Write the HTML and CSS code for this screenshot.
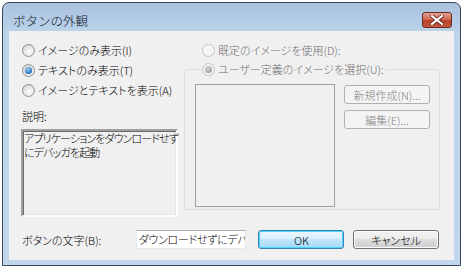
FILE: index.html
```html
<!DOCTYPE html>
<html lang="ja">

<head>
    <meta charset="UTF-8">
    <title>ボタンの外観</title>
    <link rel="stylesheet" href="styles.css">
</head>

<body>
    <div class="window">
        <div class="titlebar">
            <span class="title">ボタンの外観</span>
            <button class="close" aria-label="閉じる">
                <svg width="14" height="10" viewBox="0 0 14 10">
                    <path d="M2 1 L12 9 M12 1 L2 9" stroke="#5a1a12" stroke-width="3.6" stroke-linecap="square" />
                    <path d="M2 1 L12 9 M12 1 L2 9" stroke="#fff" stroke-width="2.2" stroke-linecap="square" />
                </svg>
            </button>
        </div>
        <div class="client">
            <div class="top">
                <div class="left-col">
                    <label class="radio-row"><span class="radio"></span>イメージのみ表示(I)</label>
                    <label class="radio-row"><span class="radio checked"></span>テキストのみ表示(T)</label>
                    <label class="radio-row"><span class="radio"></span>イメージとテキストを表示(A)</label>
                    <div class="desc-label">説明:</div>
                    <div class="desc-box">アプリケーションをダウンロードせず<br>にデバッガを起動</div>
                </div>
                <div class="right-col">
                    <label class="radio-row disabled first"><span class="radio"></span>既定のイメージを使用(D):</label>
                    <fieldset class="group">
                        <legend class="radio-row disabled"><span class="radio checked"></span>ユーザー定義のイメージを選択(U):</legend>
                        <div class="group-body">
                            <div class="preview"></div>
                            <div class="side-buttons">
                                <button class="btn" disabled>新規作成(N)...</button>
                                <button class="btn" disabled>編集(E)...</button>
                            </div>
                        </div>
                    </fieldset>
                </div>
            </div>
            <div class="bottom">
                <span class="text-label">ボタンの文字(B):</span>
                <div class="textbox"><span class="textbox-value">ダウンロードせずにデバッガを起動</span></div>
                <button class="btn default">OK</button>
                <button class="btn">キャンセル</button>
            </div>
        </div>
    </div>
</body>

</html>
```

FILE: styles.css
```css
body {
    margin: 0;
    background: #fff;
    font-family: "Noto Sans CJK JP", "Liberation Sans", sans-serif;
    font-size: 11px;
    font-weight: 300;
    color: #000;
}

.window {
    margin: 2px 0 0 2px;
    width: 457px;
    height: 262px;
    border: 1px solid #3a4756;
    border-radius: 7px 7px 0 0;
    background: linear-gradient(#a9c1dc, #bcd3ea 30px, #c2d7ed);
    box-shadow: 0 2px 0 #52c8ea;
    display: flex;
    flex-direction: column;
}

.titlebar {
    height: 28px;
    display: flex;
    align-items: center;
    padding: 0 8px 0 10px;
}

.title {
    flex: 1;
    padding-top: 6px;
    font-size: 12.5px;
    color: #0d1a2a;
}

.close {
    margin-top: 6px;
    width: 30px;
    height: 16px;
    padding: 0;
    border: 1px solid #6b2a22;
    border-radius: 3px;
    background: linear-gradient(#e3a08f, #cf6a55 45%, #b8412c 55%, #c6573f);
    display: flex;
    align-items: center;
    justify-content: center;
}

.client {
    margin: 0 6px;
    height: 229px;
    background: #f0f0f0;
    padding: 9px 15px 0 12px;
    box-sizing: border-box;
}

.top {
    display: flex;
    gap: 6px;
}

.left-col {
    width: 157px;
}

.radio-row {
    display: flex;
    align-items: center;
    height: 20px;
    white-space: nowrap;
    font-feature-settings: "palt";
}

.left-col .radio-row {
    padding-left: 1px;
}

.radio {
    width: 11px;
    height: 11px;
    border: 1px solid #8e8f8f;
    border-radius: 50%;
    background: radial-gradient(circle at 60% 65%, #fcfcfc, #dcdcdc 70%, #c8c8c8);
    margin-right: 3px;
    box-sizing: content-box;
    position: relative;
    flex: none;
}

.radio.checked::after {
    content: "";
    position: absolute;
    left: 2px;
    top: 2px;
    width: 7px;
    height: 7px;
    border-radius: 50%;
    background: radial-gradient(circle at 40% 35%, #9fd6f7, #2f7ac4 60%, #1c4f93);
}

.disabled {
    color: #6d6d6d;
}

.disabled .radio {
    border-color: #c2c2c2;
    background: #f4f4f4;
}

.disabled .radio.checked::after {
    background: radial-gradient(circle at 40% 35%, #d6d6d6, #a2a2a2 70%, #8a8a8a);
}

.desc-label {
    margin-top: 6px;
    height: 20px;
    line-height: 20px;
    padding-left: 1px;
}

.desc-box {
    margin-top: 3px;
    height: 88px;
    box-sizing: border-box;
    border-style: solid;
    border-width: 2px;
    border-color: #a0a0a0 #fff #fff #a0a0a0;
    box-shadow: inset 1px 1px #696969, inset -1px -1px #e3e3e3;
    padding: 0 0 0 1px;
    line-height: 14px;
    letter-spacing: -0.9px;
    font-feature-settings: "palt";
    white-space: nowrap;
}

.right-col {
    width: 256px;
}

.right-col .first {
    padding-left: 18px;
}

.group {
    margin: 0;
    padding: 0 9px 10px 10px;
    border: 1px solid #d5dfe5;
    border-radius: 3px;
    height: 150px;
    box-sizing: border-box;
}

.group legend {
    padding: 0 2px 0 0;
    margin-left: 7px;
    height: 18px;
}

.group-body {
    display: flex;
    gap: 9px;
    padding-top: 6px;
}

.preview {
    width: 140px;
    height: 123px;
    box-sizing: border-box;
    border: 1px solid #a0a0a0;
}

.side-buttons {
    display: flex;
    flex-direction: column;
    gap: 6px;
    padding-top: 1px;
}

.btn {
    width: 86px;
    height: 19px;
    padding: 0;
    box-sizing: border-box;
    border: 1px solid #707070;
    border-radius: 3px;
    background: linear-gradient(#f2f2f2, #ebebeb 50%, #dddddd 50%, #cfcfcf);
    box-shadow: inset 0 0 0 1px #fcfcfc;
    font-family: inherit;
    font-size: 11px;
    font-weight: 300;
    color: #000;
    font-feature-settings: "palt";
}

.btn:disabled {
    border-color: #adb2b5;
    background: #f4f4f4;
    color: #838383;
    box-shadow: none;
}

.bottom {
    display: flex;
    align-items: center;
    margin-top: 13px;
}

.text-label {
    width: 114px;
    padding-left: 1px;
    white-space: nowrap;
    font-feature-settings: "palt";
}

.textbox {
    width: 111px;
    height: 19px;
    box-sizing: border-box;
    background: #fff;
    border: 1px solid #e3e9ef;
    border-top-color: #abadb3;
    padding: 0 0 0 2px;
    line-height: 17px;
    overflow: hidden;
    white-space: nowrap;
    letter-spacing: -0.3px;
    font-feature-settings: "palt";
    margin-right: 12px;
}

.textbox-value {
    display: block;
    overflow: hidden;
}

.btn.default {
    border-color: #3c7fb1;
    background: linear-gradient(#eaf6fd, #d9f0fc 50%, #bee6fd 50%, #a7d9f5);
    box-shadow: inset 0 0 0 1px #48d8fb;
    margin-right: 9px;
}
```
